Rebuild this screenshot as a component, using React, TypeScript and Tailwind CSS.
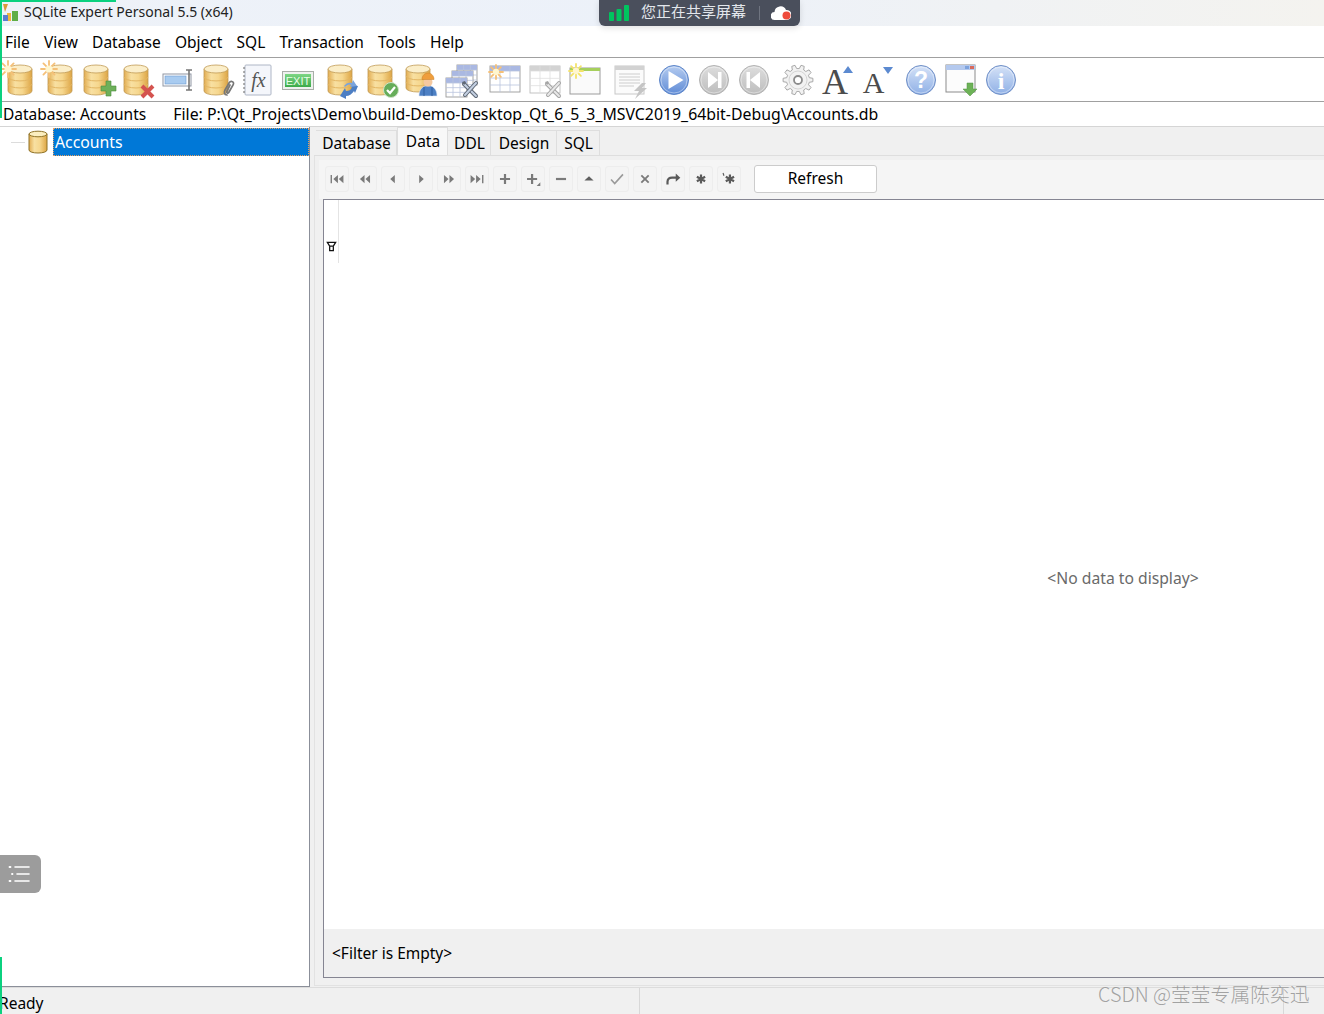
import React from "react";

const Defs = () => (
  <svg className="absolute w-0 h-0" aria-hidden="true">
    <defs>
      <linearGradient id="cyl" x1="0" x2="1" y1="0" y2="0">
        <stop offset="0" stopColor="#e2ad52" />
        <stop offset="0.3" stopColor="#f8e0a2" />
        <stop offset="0.6" stopColor="#f6d78e" />
        <stop offset="1" stopColor="#dda544" />
      </linearGradient>
      <linearGradient id="blue" x1="0" x2="0" y1="0" y2="1">
        <stop offset="0" stopColor="#b5ccf0" />
        <stop offset="1" stopColor="#5f8bd6" />
      </linearGradient>
      <linearGradient id="lblue" x1="0" x2="0" y1="0" y2="1">
        <stop offset="0" stopColor="#d5e2f7" />
        <stop offset="1" stopColor="#8fb0e6" />
      </linearGradient>
      <linearGradient id="gray" x1="0" x2="0" y1="0" y2="1">
        <stop offset="0" stopColor="#dedede" />
        <stop offset="1" stopColor="#bdbdbd" />
      </linearGradient>
      <linearGradient id="exit" x1="0" x2="0" y1="0" y2="1">
        <stop offset="0" stopColor="#7dd685" />
        <stop offset="1" stopColor="#3daa4a" />
      </linearGradient>
    </defs>
  </svg>
);

const Ico = ({ children }: { children: React.ReactNode }) => (
  <svg viewBox="0 0 36 36" className="w-9 h-9 shrink-0 overflow-visible">
    {children}
  </svg>
);

const Cyl = ({ x = 4, y = 3, w = 24, h = 30 }: { x?: number; y?: number; w?: number; h?: number }) => {
  const rx = w / 2;
  const ry = 4;
  const cx = x + rx;
  return (
    <g>
      <path
        d={`M${x} ${y + ry}V${y + h - ry}A${rx} ${ry} 0 0 0 ${x + w} ${y + h - ry}V${y + ry}Z`}
        fill="url(#cyl)"
        stroke="#c09a55"
        strokeWidth="0.8"
      />
      <path
        d={`M${x} ${y + ry + (h - 2 * ry) * 0.36}A${rx} ${ry} 0 0 0 ${x + w} ${y + ry + (h - 2 * ry) * 0.36}`}
        fill="none"
        stroke="#e3b664"
        strokeWidth="1"
      />
      <path
        d={`M${x} ${y + ry + (h - 2 * ry) * 0.68}A${rx} ${ry} 0 0 0 ${x + w} ${y + ry + (h - 2 * ry) * 0.68}`}
        fill="none"
        stroke="#e3b664"
        strokeWidth="1"
      />
      <ellipse cx={cx} cy={y + ry} rx={rx} ry={ry} fill="#fbeec9" stroke="#c09a55" strokeWidth="0.8" />
    </g>
  );
};

const Star = ({ x = 9, y = 7, r = 8, c = "#f5c078" }: { x?: number; y?: number; r?: number; c?: string }) => (
  <g stroke={c} strokeWidth="1.8" strokeLinecap="round">
    <path d={`M${x - r} ${y}H${x + r}M${x} ${y - r}V${y + r}M${x - r * 0.7} ${y - r * 0.7}L${x + r * 0.7} ${y + r * 0.7}M${x - r * 0.7} ${y + r * 0.7}L${x + r * 0.7} ${y - r * 0.7}`} />
    <circle cx={x} cy={y} r={r * 0.45} fill="#fff6cf" stroke="none" />
  </g>
);

const TableGrid = ({ x, y, w, h, head = "#aab8e2", line = "#b9c4dd", stroke = "#9a9a9a", cols = 3, rows = 3 }: { x: number; y: number; w: number; h: number; head?: string; line?: string; stroke?: string; cols?: number; rows?: number }) => {
  const ls: React.ReactNode[] = [];
  for (let i = 1; i < cols; i++) {
    ls.push(<path key={"c" + i} d={`M${x + (w * i) / cols} ${y}V${y + h}`} stroke={line} strokeWidth="0.8" />);
  }
  for (let i = 1; i <= rows; i++) {
    const yy = y + 5 + ((h - 5) * (i - 1)) / rows;
    ls.push(<path key={"r" + i} d={`M${x} ${yy}H${x + w}`} stroke={line} strokeWidth="0.8" />);
  }
  return (
    <g>
      <rect x={x} y={y} width={w} height={h} fill="#fff" stroke={stroke} strokeWidth="0.9" />
      <rect x={x} y={y} width={w} height={5} fill={head} />
      {ls}
    </g>
  );
};

const Wrench = ({ dark = "#5f6875", light = "#c4d0e2" }: { dark?: string; light?: string }) => (
  <g strokeLinecap="round" fill="none">
    <path d="M20 22L32 34" stroke={dark} strokeWidth="4" />
    <path d="M20 22L32 34" stroke={light} strokeWidth="2" />
    <path d="M32 21L21 33" stroke={dark} strokeWidth="4" />
    <path d="M32 21L21 33" stroke={light} strokeWidth="2" />
    <path d="M18 20l3-1 1 2-2 2z" fill={dark} />
  </g>
);

const RoundBtn = ({ fill, children, stroke }: { fill: string; stroke: string; children: React.ReactNode }) => (
  <g>
    <circle cx="18" cy="18" r="14.5" fill={fill} stroke={stroke} strokeWidth="1" />
    <circle cx="18" cy="18" r="13" fill="none" stroke="#ffffff" strokeOpacity="0.4" strokeWidth="1" />
    {children}
  </g>
);

const gearPath = (() => {
  const pts: string[] = [];
  const n = 10;
  for (let i = 0; i < n; i++) {
    const a = (i / n) * Math.PI * 2;
    const s = (Math.PI * 2) / n;
    const p = (r: number, t: number) => `${(18 + r * Math.cos(t)).toFixed(2)} ${(18 + r * Math.sin(t)).toFixed(2)}`;
    pts.push(p(11.5, a - s * 0.32), p(15, a - s * 0.18), p(15, a + s * 0.18), p(11.5, a + s * 0.32));
  }
  return "M" + pts.join("L") + "Z";
})();

const toolbar: { gap?: number; node: React.ReactNode }[] = [
  { node: <Ico><Cyl x={8} /><Star x={8} /></Ico> },
  { node: <Ico><Cyl x={8} /><Star x={9} /></Ico> },
  { node: <Ico><Cyl /><path d="M22 27h5v-5h5v5h5v5h-5v5h-5v-5h-5z" fill="#6eb05a" stroke="#4b8d3e" strokeWidth="0.6" transform="translate(-1 -3)" /></Ico> },
  { node: <Ico><Cyl /><path d="M22 24L33 35M33 24L22 35" stroke="#d4534f" strokeWidth="4" /></Ico> },
  {
    node: (
      <Ico>
        <rect x="3" y="12" width="28" height="12" fill="#fff" stroke="#8f96a3" strokeWidth="1" />
        <rect x="5" y="14" width="21" height="8" fill="#a8cbf0" stroke="#6c9ad0" strokeWidth="0.6" />
        <path d="M26 8h6M26 28h6M29 8v20" stroke="#777" strokeWidth="1.6" />
      </Ico>
    ),
  },
  {
    node: (
      <Ico>
        <Cyl />
        <path d="M27 33c-3 0-3-3-2-5l4-7c2-3 6-1 4 2l-4 7c-1 2-3 1-2 -1l3-6" fill="none" stroke="#777" strokeWidth="1.7" strokeLinecap="round" />
      </Ico>
    ),
  },
  {
    node: (
      <Ico>
        <rect x="5" y="3" width="26" height="30" rx="1" fill="#f4f6fb" stroke="#aeb6c6" strokeWidth="1" />
        <path d="M5 6h-2M5 10h-2M5 14h-2M5 18h-2M5 22h-2M5 26h-2M5 30h-2" stroke="#666" strokeWidth="1" />
        <text x="18.500" y="25" textAnchor="middle" fontFamily="Liberation Serif, serif" fontStyle="italic" fontSize="20" fill="#555">fx</text>
      </Ico>
    ),
  },
  {
    node: (
      <Ico>
        <rect x="2.5" y="9.5" width="31" height="18" fill="#eef1ee" stroke="#a9aea9" />
        <rect x="5" y="12" width="26" height="13" fill="url(#exit)" />
        <text x="18" y="23" textAnchor="middle" fontFamily="Liberation Sans, sans-serif" fontSize="11" fill="#e8ffe8">EXIT</text>
      </Ico>
    ),
  },
  {
    gap: 8,
    node: (
      <Ico>
        <Cyl />
        <path d="M16 34l5-8 1 3c3 0 5-1 6-4l-1-2 7 1-3 7-1-2c-2 3-5 5-8 5v3z" fill="#4d7fc4" />
        <path d="M20 24c2-3 5-4 8-3l1-3 4 6-7 1 1-2c-2-1-4 0-6 2z" fill="#7aa4dc" />
      </Ico>
    ),
  },
  {
    node: (
      <Ico>
        <Cyl x={4} />
        <circle cx="27" cy="28" r="7.5" fill="#66ad5a" stroke="#cfe3c8" strokeWidth="1" />
        <path d="M23 28l3 3 5-6" fill="none" stroke="#fff" strokeWidth="2.2" />
      </Ico>
    ),
  },
  {
    node: (
      <Ico>
        <Cyl x={2} h={27} />
        <path d="M15 34c0-6 3-9 6-10h6c3 1 6 4 6 10z" fill="#4d80c4" stroke="#dbe6f5" strokeWidth="0.6" />
        <path d="M20 25v9M28 25v9" stroke="#2f5c9e" strokeWidth="1" />
        <circle cx="24" cy="20" r="4.500" fill="#f4c9a0" />
        <path d="M18 17.500c0-4 3-6.500 6-6.500s6 2.500 6 6.500z" fill="#ef9e3d" stroke="#c97f26" strokeWidth="0.5" />
      </Ico>
    ),
  },
  {
    node: (
      <Ico>
        <TableGrid x={13} y={3} w={20} h={20} />
        <TableGrid x={8} y={9} w={21} h={18} />
        <TableGrid x={2} y={16} w={21} h={19} />
        <Wrench />
      </Ico>
    ),
  },
  {
    gap: 7,
    node: (
      <Ico>
        <TableGrid x={3} y={4} w={30} h={26} cols={3} rows={3} />
        <Star x={9} y={10} r={7} />
      </Ico>
    ),
  },
  {
    node: (
      <Ico>
        <TableGrid x={3} y={4} w={30} h={27} head="#d3d3d3" line="#dedede" stroke="#bdbdbd" />
        <Wrench dark="#a5a5a5" light="#e8e8e8" />
      </Ico>
    ),
  },
  {
    node: (
      <Ico>
        <rect x="3" y="6" width="30" height="26" fill="#fafafa" stroke="#9c9c9c" />
        <rect x="3" y="6" width="30" height="3" fill="#a6cf5c" />
        <Star x={9} y={9} r={7} c="#f3e36a" />
      </Ico>
    ),
  },
  {
    gap: 9,
    node: (
      <Ico>
        <rect x="3" y="4" width="29" height="28" fill="#fbfbfb" stroke="#c8c8c8" />
        <rect x="3" y="4" width="29" height="4" fill="#d2d2d2" />
        <path d="M7 12h21M7 15h21M7 18h21M7 21h21M7 24h15" stroke="#cdcdcd" strokeWidth="1.2" />
        <path d="M30 21l-8 8 5 0-4 8 12-11h-5l4-5z" fill="#c5c5c5" />
      </Ico>
    ),
  },
  {
    gap: 8,
    node: (
      <Ico>
        <RoundBtn fill="url(#blue)" stroke="#5c85c9">
          <path d="M12.500 9L27.500 18 12.500 27z" fill="#fff" />
        </RoundBtn>
      </Ico>
    ),
  },
  {
    node: (
      <Ico>
        <RoundBtn fill="url(#gray)" stroke="#b3b3b3">
          <path d="M12 10l10 8-10 8zM22 10h3.500v16H22z" fill="#fff" />
        </RoundBtn>
      </Ico>
    ),
  },
  {
    node: (
      <Ico>
        <RoundBtn fill="url(#gray)" stroke="#b3b3b3">
          <path d="M24 10l-10 8 10 8zM10.500 10H14v16h-3.500z" fill="#fff" />
        </RoundBtn>
      </Ico>
    ),
  },
  {
    gap: 8,
    node: (
      <Ico>
        <path d={gearPath} fill="#f2f2f2" stroke="#a8a8a8" strokeWidth="1" strokeLinejoin="round" />
        <circle cx="18" cy="18" r="9" fill="none" stroke="#d4d4d4" strokeWidth="1" />
        <circle cx="18" cy="18" r="4" fill="#fff" stroke="#8c8c8c" strokeWidth="1.800" />
      </Ico>
    ),
  },
  {
    gap: 2,
    node: (
      <Ico>
        <text x="17" y="32" textAnchor="middle" fontFamily="Liberation Serif, serif" fontSize="36" fill="#4c4c4c">A</text>
        <path d="M25 11l5-7 5 7z" fill="#5c8ad0" />
      </Ico>
    ),
  },
  {
    gap: 4,
    node: (
      <Ico>
        <text x="15.500" y="31" textAnchor="middle" fontFamily="Liberation Serif, serif" fontSize="30" fill="#4c4c4c">A</text>
        <path d="M25 5h10l-5 7z" fill="#5c8ad0" />
      </Ico>
    ),
  },
  {
    gap: 9,
    node: (
      <Ico>
        <RoundBtn fill="url(#lblue)" stroke="#6f8fc7">
          <text x="18" y="26" textAnchor="middle" fontFamily="Liberation Sans, sans-serif" fontWeight="700" fontSize="23" fill="#fff">?</text>
        </RoundBtn>
      </Ico>
    ),
  },
  {
    node: (
      <Ico>
        <rect x="3" y="3" width="29" height="27" fill="#fcfcfc" stroke="#8c8c8c" />
        <rect x="3" y="3" width="29" height="5" fill="#b4c9ee" />
        <rect x="22" y="4" width="4" height="3" fill="#7ea3dd" />
        <rect x="27" y="4" width="4" height="3" fill="#d96a5c" />
        <path d="M24 21h6v6h4l-7 7-7-7h4z" fill="#6db257" stroke="#4f9140" strokeWidth="0.5" />
      </Ico>
    ),
  },
  {
    node: (
      <Ico>
        <RoundBtn fill="url(#lblue)" stroke="#6f8fc7">
          <text x="18" y="27" textAnchor="middle" fontFamily="Liberation Serif, serif" fontWeight="700" fontSize="24" fill="#fff">i</text>
        </RoundBtn>
      </Ico>
    ),
  },
];

const g = "#7a7a7a";
const navIcons: React.ReactNode[] = [
  <path d="M5 7.500h1.500v9H5zM13 7.500v9L8 12zM19 7.500v9L14 12z" fill={g} />,
  <path d="M11.500 7.500v9l-5-4.500zM17.500 7.500v9l-5-4.500z" fill={g} />,
  <path d="M14 7.500v9L9 12z" fill={g} />,
  <path d="M10 7.500v9l5-4.500z" fill={g} />,
  <path d="M6.500 7.500v9l5-4.500zM12.500 7.500v9l5-4.500z" fill={g} />,
  <path d="M5 7.500v9l5-4.500zM11 7.500v9l5-4.500zM17.500 7.500H19v9h-1.500z" fill={g} />,
  <path d="M10.800 6.500h2.400v4.300h4.300v2.400h-4.300v4.300h-2.400v-4.300H6.500v-2.400h4.300z" fill={g} />,
  <g><path d="M9.800 6.500h2.400v4.300h4.300v2.400h-4.300v4.300H9.800v-4.300H5.500v-2.400h4.300z" fill={g} /><path d="M20 15.500v4h-4z" fill={g} /></g>,
  <path d="M6.500 10.800h11v2.400h-11z" fill={g} />,
  <path d="M12 9l5 4.500H7z" fill="#5f5f5f" />,
  <path d="M5.500 12.500l4 4.500L18.500 7" fill="none" stroke="#9a9a9a" strokeWidth="1.800" />,
  <path d="M8 8l8 8M16 8l-8 8" stroke={g} strokeWidth="2" />,
  <g><path d="M6 18v-3c0-3 2-4.500 5-4.500h5" fill="none" stroke="#5a5a5a" strokeWidth="2.400" /><path d="M15 6l5 4.500-5 4.500z" fill="#5a5a5a" /></g>,
  <path d="M12 7v10M7.500 9.500l9 5M16.500 9.500l-9 5" stroke="#5a5a5a" strokeWidth="2.400" />,
  <g><path d="M13 7v10M8.500 9.500l9 5M17.500 9.500l-9 5" stroke="#5a5a5a" strokeWidth="2.400" /><path d="M5.500 5.500l1 3" stroke="#5a5a5a" strokeWidth="1.200" /></g>,
];

const Tab = ({ label, active, w }: { label: string; active?: boolean; w: string }) =>
  active ? (
    <div className={`${w} h-[28px] flex items-center justify-center pl-[1px] bg-[#f8f8f8] border border-[#dedede] border-b-0 text-black`}>{label}</div>
  ) : (
    <div className={`${w} h-[25px] flex items-center justify-center pl-[1px] pt-[1px] bg-[#f0f0f0] border border-l-0 border-[#dedede] border-b-0 text-black`}>{label}</div>
  );

export default function App() {
  return (
    <div className="relative w-[1324px] h-[1014px] overflow-hidden bg-white text-[15.5px] text-black font-['Noto_Sans','Open_Sans',sans-serif] flex flex-col">
      <Defs />
      {/* title bar */}
      <div className="h-[26px] shrink-0 flex items-center bg-gradient-to-r from-[#eef2f8] via-[#ecf1f9] to-[#f4f3ef] pl-[2px]">
        <svg viewBox="0 0 20 20" className="w-5 h-5 mr-[2px] -mt-[1px]">
          <path d="M1 1l5 0-3 8z" fill="#d99a3a" />
          <path d="M5 10h4v8H5z" fill="#f0b63c" />
          <path d="M1 12h5v6H1z" fill="#5a7fd0" />
          <path d="M10 8h6v10h-6z" fill="#5fae46" />
        </svg>
        <span className="text-[14px] leading-none text-[#222] pb-[2px]">SQLite Expert Personal 5.5 (x64)</span>
      </div>
      {/* menu bar */}
      <div className="h-[32px] shrink-0 flex items-center gap-[14.2px] pl-[5px] pt-[2px] border-b border-[#a0a0a0] bg-white">
        {["File", "View", "Database", "Object", "SQL", "Transaction", "Tools", "Help"].map((m) => (
          <span key={m}>{m}</span>
        ))}
      </div>
      {/* toolbar */}
      <div className="h-[44px] shrink-0 flex items-center border-b border-[#a0a0a0]">
        {toolbar.map((t, i) => (
          <div key={i} className="ml-[4px] first:ml-0" style={t.gap ? { marginLeft: t.gap } : undefined}>
            {t.node}
          </div>
        ))}
      </div>
      {/* path bar */}
      <div className="h-[25px] shrink-0 flex items-center pl-[3px] pt-[2px] gap-[27px] border-b border-[#d5d5d5]">
        <span>Database: Accounts</span>
        <span className="text-[15.85px]">File: P:\Qt_Projects\Demo\build-Demo-Desktop_Qt_6_5_3_MSVC2019_64bit-Debug\Accounts.db</span>
      </div>
      {/* main */}
      <div className="h-[860px] shrink-0 flex">
        {/* tree */}
        <div className="w-[310px] shrink-0 h-full border-r border-b border-[#8b8f99] bg-white pt-[1px]">
          <div className="h-[28px] flex items-center">
            <div className="w-[14px] h-px bg-[#dcdcdc] ml-[11px]" />
            <svg viewBox="0 0 20 24" className="w-5 h-6 ml-[3px] mr-[5px]">
              <path d="M1 4v16c0 4 18 4 18 0V4z" fill="url(#cyl)" stroke="#8f7328" strokeWidth="1" />
              <ellipse cx="10" cy="4" rx="9" ry="2.800" fill="#fbeec0" stroke="#8f7328" strokeWidth="1" />
            </svg>
            <div className="flex-1 h-[28px] flex items-center bg-[#0078d7] text-white text-[15.8px] pl-[1px] pt-[2px] border border-dotted border-[#e8a060]">Accounts</div>
          </div>
        </div>
        {/* right */}
        <div className="flex-1 min-w-0 flex flex-col bg-[#f0f0f0] border-l-[4px] border-[#f0f0f0]">
          <div className="h-[29px] shrink-0 flex items-end pl-[2px] border-b border-[#dedede]">
            <Tab label="Database" w="w-[81px]" />
            <Tab label="Data" active w="w-[51px]" />
            <Tab label="DDL" w="w-[43px]" />
            <Tab label="Design" w="w-[66px]" />
            <Tab label="SQL" w="w-[43px]" />
          </div>
          <div className="flex-1 min-h-0 flex flex-col border-l border-b border-[#e2e2e2] mb-[1px] pl-[8px] pb-[7px] pt-[4px] bg-[#f0f0f0]">
            <div className="h-[39px] shrink-0 flex items-center -ml-[4px] pl-[6px] pb-[2px] bg-[#f5f5f5]">
              <div className="flex gap-[4px]">
                {navIcons.map((ic, i) => (
                  <div key={i} className="w-[24px] h-[26px] flex items-center justify-center rounded-[3px] bg-[#f4f4f4] border border-[#ededed]">
                    <svg viewBox="0 0 24 24" className="w-[22px] h-[22px]">{ic}</svg>
                  </div>
                ))}
              </div>
              <div className="ml-[13px] w-[123px] h-[28px] flex items-center justify-center rounded-[3px] bg-white border border-[#cccccc]">Refresh</div>
            </div>
            <div className="w-[1600px] flex-1 min-h-0 flex flex-col border border-[#858592] bg-white">
              <div className="flex-1 min-h-0 flex bg-white">
                <div className="w-[15px] h-[63px] shrink-0 border-r border-[#e4e4e4] flex items-end justify-center pb-[11px]">
                  <svg viewBox="0 0 12 12" className="w-[11px] h-[11px]">
                    <path d="M1.500 1.500h9L8 5.500H4zM4 5.500h4v5H4z" fill="#fff" stroke="#111" strokeWidth="1.400" />
                  </svg>
                </div>
                <div className="flex-1 flex items-center justify-center text-[15.7px] text-[#6a6a6a] pr-[15px] pt-[29px]">&lt;No data to display&gt;</div>
              </div>
              <div className="h-[48px] shrink-0 flex items-center pl-[8px] pt-[2px] bg-[#f0f0f0]">&lt;Filter is Empty&gt;</div>
            </div>
          </div>
        </div>
      </div>
      {/* status bar */}
      <div className="flex-1 min-h-0 flex items-center bg-[#f0f0f0] border-t border-[#dcdcdc] overflow-hidden">
        <div className="w-[641px] h-full flex items-center border-r border-[#d8d8d8] -ml-[1px] pt-[5px]">Ready</div>
        <div className="w-[644px] h-full border-r border-[#d8d8d8]" />
      </div>

      {/* overlays */}
      <div className="absolute left-0 top-0 w-[116px] h-[2px] bg-[#0bd17f]" />
      <div className="absolute left-0 top-0 w-[2px] h-[118px] bg-[#0bd17f]" />
      <div className="absolute left-0 top-[957px] bottom-0 w-[2px] bg-[#0bd17f]" />
      <div className="absolute left-[599px] top-0 w-[201px] h-[26px] bg-[#4a4f5c] rounded-b-[6px] flex items-center shadow-[0_2px_6px_rgba(0,0,0,0.12)]">
        <svg viewBox="0 0 20 16" className="w-5 h-4 ml-[10px]">
          <rect x="0" y="7" width="5" height="9" rx="1" fill="#00c45f" />
          <rect x="7.500" y="4" width="5" height="12" rx="1" fill="#00c45f" />
          <rect x="15" y="0" width="5" height="16" rx="1" fill="#00c45f" />
        </svg>
        <span className="ml-[12px] mb-[6px] text-[15px] leading-none text-[#e3e7ec] font-['Noto_Sans_CJK_SC',sans-serif]">您正在共享屏幕</span>
        <div className="ml-[13px] w-px h-[14px] bg-[#6f7480]" />
        <svg viewBox="0 0 20 16" className="w-5 h-4 ml-[11px]">
          <path d="M4 15a4 4 0 0 1-.5-8A6 6 0 0 1 15 5a5 5 0 0 1 1 10z" fill="#fff" />
          <circle cx="15.500" cy="10.500" r="4" fill="#ee4b3c" />
        </svg>
      </div>
      <div className="absolute left-0 top-[855px] w-[41px] h-[38px] rounded-r-[6px] bg-[#9c9c9c] flex items-center justify-center">
        <svg viewBox="0 0 22 18" className="w-[22px] h-[18px] -ml-[3px]">
          <path d="M7 2h14M9 9h12M7 16h14" stroke="#fff" strokeWidth="1.600" strokeLinecap="round" />
          <path d="M1.500 2h1M4 9h.5M1.500 16h1" stroke="#fff" strokeWidth="1.800" strokeLinecap="round" />
        </svg>
      </div>
      <div className="absolute left-[1098px] top-[980px] text-[19.8px] leading-[28px] whitespace-nowrap text-[#8d8d8d]/80 font-['Noto_Sans_CJK_SC',sans-serif] font-light">CSDN @莹莹专属陈奕迅</div>
    </div>
  );
}
